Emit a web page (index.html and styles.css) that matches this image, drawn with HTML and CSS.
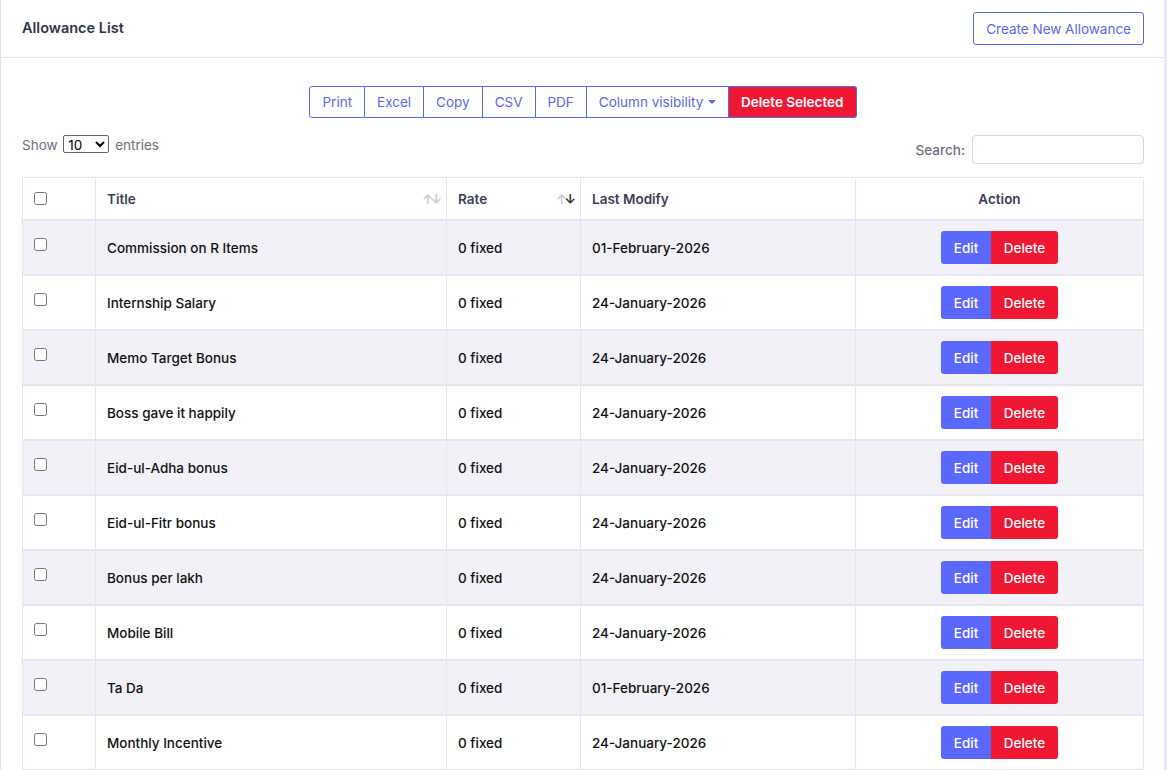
FILE: index.html
```html
<!DOCTYPE html>
<html lang="en">
<head>
    <meta charset="UTF-8">
    <meta name="viewport" content="width=device-width, initial-scale=1.0">
    <title>Allowance List</title>
    <link rel="stylesheet" href="styles.css">
</head>
<body>
    <div class="card">
        <div class="card-header">
            <h4 class="card-title">Allowance List</h4>
            <button class="btn-outline">Create New Allowance</button>
        </div>

        <div class="card-body">
            <div class="dt-buttons">
                <button class="dt-btn">Print</button>
                <button class="dt-btn">Excel</button>
                <button class="dt-btn">Copy</button>
                <button class="dt-btn">CSV</button>
                <button class="dt-btn">PDF</button>
                <button class="dt-btn">Column visibility <span class="caret"></span></button>
                <button class="dt-btn dt-danger">Delete Selected</button>
            </div>

            <div class="dt-top">
                <label class="dt-length">Show
                    <select>
                        <option>10</option>
                        <option>25</option>
                        <option>50</option>
                    </select>
                    entries</label>
                <label class="dt-filter">Search: <input type="search"></label>
            </div>

            <table class="data-table">
                <colgroup>
                    <col style="width:73px">
                    <col style="width:351px">
                    <col style="width:134px">
                    <col style="width:275px">
                    <col>
                </colgroup>
                <thead>
                    <tr>
                        <th><input type="checkbox"></th>
                        <th class="sorting">Title <span class="sort"><i>&uarr;</i><i>&darr;</i></span></th>
                        <th class="sorting">Rate <span class="sort"><i>&uarr;</i><i class="on">&darr;</i></span></th>
                        <th>Last Modify</th>
                        <th class="center">Action</th>
                    </tr>
                </thead>
                <tbody id="rows"></tbody>
            </table>
        </div>
    </div>

    <script>
        const allowances = [
            ["Commission on R Items", "0 fixed", "01-February-2026"],
            ["Internship Salary", "0 fixed", "24-January-2026"],
            ["Memo Target Bonus", "0 fixed", "24-January-2026"],
            ["Boss gave it happily", "0 fixed", "24-January-2026"],
            ["Eid-ul-Adha bonus", "0 fixed", "24-January-2026"],
            ["Eid-ul-Fitr bonus", "0 fixed", "24-January-2026"],
            ["Bonus per lakh", "0 fixed", "24-January-2026"],
            ["Mobile Bill", "0 fixed", "24-January-2026"],
            ["Ta Da", "0 fixed", "01-February-2026"],
            ["Monthly Incentive", "0 fixed", "24-January-2026"],
        ];

        const tbody = document.getElementById("rows");
        allowances.forEach(a => {
            const tr = document.createElement("tr");
            tr.innerHTML =
                '<td class="check"><input type="checkbox"></td>' +
                '<td>' + a[0] + '</td>' +
                '<td>' + a[1] + '</td>' +
                '<td>' + a[2] + '</td>' +
                '<td class="center"><div class="actions">' +
                '<button class="btn-edit">Edit</button>' +
                '<button class="btn-delete">Delete</button></div></td>';
            tbody.appendChild(tr);
        });
    </script>
</body>
</html>
```

FILE: styles.css
```css
body {
    margin: 0;
    font-family: Inter, "Noto Sans", sans-serif;
    font-size: 13.5px;
    color: #1c1c28;
    background-color: #ebeaf4;
}

.card {
    background-color: #fff;
    border-left: 1px solid #e2e1ee;
    margin-right: 3px;
    min-height: 770px;
}

.card-header {
    display: flex;
    justify-content: space-between;
    align-items: center;
    padding: 12px 20px 12px 20px;
    border-bottom: 1px solid #e6e5ef;
}

.card-title {
    margin: 0 0 3px 1px;
    font-size: 14.5px;
    font-weight: 600;
    color: #33334a;
}

.btn-outline {
    font-family: inherit;
    font-size: 13.5px;
    color: #5b67f1;
    background: #fff;
    border: 1px solid #5b67f1;
    border-radius: 3px;
    height: 33px;
    padding: 0 12px;
    cursor: pointer;
}

.card-body {
    padding: 28px 20px 0 21px;
}

.dt-buttons {
    display: flex;
    justify-content: center;
}

.dt-btn {
    font-family: inherit;
    font-size: 13.5px;
    color: #5b67f1;
    background: #fff;
    border: 1px solid #5b67f1;
    border-left-width: 0;
    height: 32px;
    padding: 0 12px;
    cursor: pointer;
}

.dt-btn:first-child {
    border-left-width: 1px;
    border-radius: 3px 0 0 3px;
}

.dt-btn:last-child {
    border-radius: 0 3px 3px 0;
}

.dt-danger {
    background-color: #ef1731;
    color: #fff;
    font-weight: 600;
}

.caret {
    display: inline-block;
    width: 0;
    height: 0;
    margin-left: 1px;
    vertical-align: 3px;
    border-left: 4px solid transparent;
    border-right: 4px solid transparent;
    border-top: 4px solid #5b67f1;
}

.dt-top {
    display: flex;
    justify-content: space-between;
    align-items: flex-start;
    margin-top: 17px;
    color: #6f6d80;
}

.dt-length {
    line-height: 20px;
}

.dt-length select {
    font-family: inherit;
    font-size: 13.5px;
    width: 46px;
    height: 18px;
    padding: 0;
    margin: 0 2px;
    color: #000;
    border: 1px solid #666;
    border-radius: 2px;
    background: #fff;
}

.dt-filter {
    display: flex;
    align-items: center;
    gap: 7px;
    font-weight: 500;
}

.dt-filter input {
    width: 172px;
    height: 29px;
    box-sizing: border-box;
    border: 1px solid #d8d7e0;
    border-radius: 4px;
}

.data-table {
    width: 100%;
    margin-top: 13px;
    border-collapse: collapse;
    table-layout: fixed;
    border: 1px solid #e6e5f0;
}

.data-table th,
.data-table td {
    border-left: 1px solid #e6e5f0;
    border-right: 1px solid #e6e5f0;
    border-bottom: 2px solid #e6e5f0;
    padding: 0 11px;
    text-align: left;
}

.data-table th {
    height: 41px;
    font-weight: 600;
    color: #3d3d55;
    position: relative;
}

.data-table td {
    height: 53px;
    font-weight: 500;
    color: #111;
}

.data-table input[type=checkbox] {
    margin: 0;
    width: 13px;
    height: 13px;
    vertical-align: -1px;
}

.data-table td.check input {
    vertical-align: 3px;
}

.data-table .center {
    text-align: center;
}

.data-table tbody tr:nth-child(odd) {
    background-color: #f2f1f8;
}

.sort {
    position: absolute;
    right: 7px;
    top: 14px;
    font-size: 13px;
    line-height: 14px;
    letter-spacing: -3px;
    color: #c8c7d2;
}

.sort i {
    font-style: normal;
}

.sort .on {
    color: #222;
}

.actions {
    display: inline-flex;
}

.btn-edit,
.btn-delete {
    font-family: inherit;
    font-size: 13.5px;
    font-weight: 500;
    color: #fff;
    border: none;
    height: 33px;
    cursor: pointer;
}

.btn-edit {
    background-color: #5b68fd;
    width: 50px;
    border-radius: 3px 0 0 3px;
}

.btn-delete {
    background-color: #ef1731;
    width: 67px;
    border-radius: 0 3px 3px 0;
}
```
